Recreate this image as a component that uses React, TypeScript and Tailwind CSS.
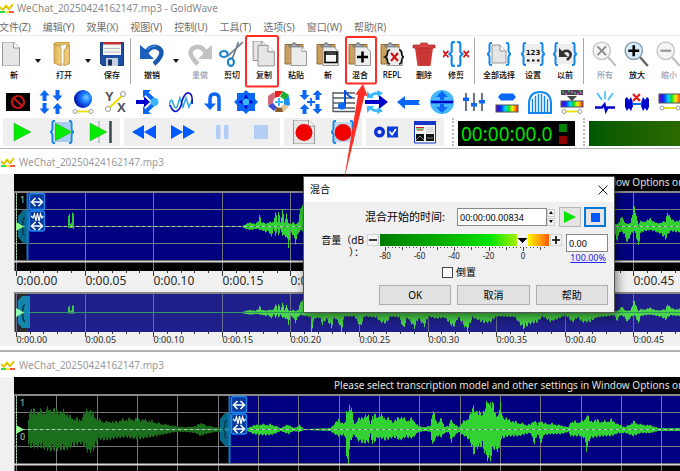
import React from "react";
import clsx from "clsx";

const BLUE = "#0a66f5";
const NAVY = "#0000cc";
const CYAN = "#38b6ff";

type Sample = [x: number, up: number, down: number];

interface Tool {
  label: string;
  icon: React.ReactNode;
  disabled?: boolean;
  menu?: string;
  className?: string;
}

/* ---------- shared icon parts ---------- */

function Icon({ children, className = "size-6" }: { children: React.ReactNode; className?: string }) {
  return (
    <svg viewBox="0 0 24 24" className={clsx("block shrink-0", className)} fill="none" aria-hidden="true">
      {children}
    </svg>
  );
}

const Paper = ({ x = 2, y = 0, w = 19, h = 24 }) => (
  <g>
    <path d={`M${x} ${y}h${w - 6}l6 6v${h - 6}h${-w}z`} fill="#e6e6e6" stroke="#8d8d8d" strokeWidth=".9" />
    <path d={`M${x + w - 6} ${y}v6h6`} fill="#fafafa" stroke="#8d8d8d" strokeWidth=".9" />
  </g>
);

const Braces = () => (
  <path
    d="M5 1H4Q2.5 1 2.5 3V9Q2.5 11 .5 12Q2.5 13 2.5 15V21Q2.5 23 4 23H5M19 1H20Q21.5 1 21.5 3V9Q21.5 11 23.5 12Q21.5 13 21.5 15V21Q21.5 23 20 23H19"
    stroke="#1487ee"
    strokeWidth="2"
  />
);

const Clipboard = ({ children }: { children?: React.ReactNode }) => (
  <Icon>
    <path d="M1 2.500h18v19.500H1z" fill="#c9a15c" stroke="#957036" />
    <path d="M5 5V3h3q0-2.500 2-2.500t2 2.500h3v2z" fill="#a8adb5" stroke="#636870" strokeWidth=".8" />
    <path d="M7 5h11l4.500 4.500V23.500H7z" fill="#ececec" stroke="#8f8f8f" strokeWidth=".9" />
    {children ?? <path d="M18 5v4.500h4.500" fill="#fff" stroke="#8f8f8f" strokeWidth=".8" />}
  </Icon>
);

const Rainbow = ({ y, h = 7, x = 1, w = 22 }: { y: number; h?: number; x?: number; w?: number }) => (
  <rect x={x} y={y} width={w} height={h} fill="url(#rainbow)" stroke="#4b5563" strokeWidth="1" />
);

const SliderBar = ({ y }: { y: number }) => (
  <g stroke="#9a9a9a">
    <path d={`M6 ${y}H18`} stroke="#e8e000" strokeWidth="1.800" />
    <circle cx="4" cy={y} r="2" fill="#fff" />
    <circle cx="20" cy={y} r="2" fill="#fff" />
  </g>
);

const Lens = ({ children, active }: { children: React.ReactNode; active?: boolean }) => (
  <Icon className="size-[26px]">
    <path d="M14.500 14.500l7.500 8.500" stroke={active ? "#666" : "#c4c4c4"} strokeWidth="2.200" />
    <circle cx="9" cy="9" r="8" fill={active ? "#d6ebfa" : "#f5f5f5"} stroke={active ? "#8a9aa8" : "#c4c4c4"} strokeWidth="1.300" />
    {children}
  </Icon>
);

function SharedDefs() {
  return (
    <svg className="absolute size-0" aria-hidden="true">
      <defs>
        <linearGradient id="rainbow">
          <stop offset="0" stopColor="#6a00b8" />
          <stop offset=".22" stopColor="#0030ff" />
          <stop offset=".42" stopColor="#00d8ff" />
          <stop offset=".58" stopColor="#10e020" />
          <stop offset=".75" stopColor="#f8f000" />
          <stop offset="1" stopColor="#ff2800" />
        </linearGradient>
        <radialGradient id="ball" cx=".68" cy=".42" r=".65">
          <stop offset="0" stopColor="#7fd0ff" />
          <stop offset=".4" stopColor="#1a7cff" />
          <stop offset="1" stopColor="#0010b0" />
        </radialGradient>
        <linearGradient id="folder">
          <stop offset="0" stopColor="#dcae4e" />
          <stop offset="1" stopColor="#f3d68c" />
        </linearGradient>
      </defs>
    </svg>
  );
}

function Logo() {
  return (
    <svg viewBox="0 0 14 10" className="h-2.5 w-3.5 shrink-0" aria-hidden="true">
      <path d="M0 4L3 6.500L6 2.500L9 6L13 1" fill="none" stroke="#f2d400" strokeWidth="2" />
      <path d="M0 4.800L3 7.300L6 3.300L9 6.800L13 1.800" fill="none" stroke="#a89000" strokeWidth=".5" />
      <path d="M0 9h5" stroke="#00d428" strokeWidth="1.600" />
      <path d="M5 9h4" stroke="#f4e400" strokeWidth="1.600" />
      <path d="M9 9h5" stroke="#ff2a10" strokeWidth="1.600" />
    </svg>
  );
}

/* ---------- main toolbar ---------- */

const fileTools: Tool[] = [
  { label: "新", icon: <Icon><Paper x={0.5} w={17} /></Icon>, menu: "w-5", className: "w-7" },
  {
    label: "打开",
    menu: "w-4",
    icon: (
      <Icon>
        <path d="M2 1.500L5 0h12v22H6z" fill="#e3b95c" stroke="#b58a35" strokeWidth=".7" />
        <path d="M8 4l6-2v20H8z" fill="#fff" stroke="#aaa" strokeWidth=".6" />
        <path d="M2 1.500l7 4v18.500l-7-3z" fill="url(#folder)" stroke="#b58a35" strokeWidth=".7" />
        <path d="M12 8l5.500-5v18L12 24z" fill="#edc977" stroke="#b58a35" strokeWidth=".7" />
      </Icon>
    ),
  },
  {
    label: "保存",
    icon: (
      <Icon>
        <path d="M.5.5h23v23H2.500l-2-2z" fill="#1d4fa3" stroke="#14386f" />
        <path d="M3 0h18v13H3z" fill="#f5f5f5" />
        <path d="M3 0h18v2.500H3z" fill="#c22f35" />
        <path d="M4 6.500h16M4 10h16" stroke="#b8b8b8" />
        <path d="M6 16h12v8H6z" fill="#c7d0dc" />
        <path d="M8 17.500h4v6H8z" fill="#173059" />
      </Icon>
    ),
  },
];

const editTools: Tool[] = [
  {
    label: "撤销",
    menu: "w-4",
    icon: (
      <Icon>
        <path d="M6 11Q10 4 16 5Q23 7 21 13Q19 18 14 22" stroke="#1758b4" strokeWidth="4.500" />
        <path d="M7 8Q11 3.500 16 4" stroke="#58a0e8" strokeWidth="1" />
        <path d="M0 3v14h14l-5-5L5 7z" fill="#1c5fbd" />
      </Icon>
    ),
  },
  {
    label: "重做",
    disabled: true,
    icon: (
      <Icon>
        <path d="M18 11Q14 4 8 5Q1 7 3 13Q5 18 10 22" stroke="#c2c2c2" strokeWidth="4.500" />
        <path d="M24 3v14H10l5-5 4-5z" fill="#c2c2c2" />
      </Icon>
    ),
  },
  {
    label: "剪切",
    icon: (
      <Icon className="size-[26px]">
        <path d="M22 1L8 14M18 1L12 17" stroke="#777f88" strokeWidth="1.600" />
        <ellipse cx="4.500" cy="12" rx="3.500" ry="2.800" stroke="#1f86c9" strokeWidth="2" />
        <ellipse cx="11" cy="19.500" rx="2.800" ry="3.500" stroke="#1f86c9" strokeWidth="2" />
      </Icon>
    ),
  },
  {
    label: "复制",
    icon: <Icon className="size-[26px]"><Paper x={2} w={14} h={18} /><Paper x={6.5} y={4} w={15} h={19} /></Icon>,
  },
  { label: "粘贴", icon: <Clipboard /> },
  {
    label: "新",
    icon: (
      <Clipboard>
        <path d="M9 10h12v10.500H9zM9 12h12" fill="#f4f4f4" stroke="#000" strokeWidth="1.600" />
      </Clipboard>
    ),
  },
  { label: "混合", icon: <Clipboard><path d="M14.500 9.500v11M9 15h11" stroke="#000" strokeWidth="2.600" /></Clipboard> },
  {
    label: "REPL",
    icon: (
      <Clipboard>
        <path d="M10 8q-2.500 0-2.500 3t-2.500 4q2.500 1 2.500 4t2.500 3M19 8q2.500 0 2.500 3t2 4q-2 1-2 4t-2.500 3" stroke="#111" strokeWidth="1.600" />
        <path d="M11 11l7 8M18 11l-7 8" stroke="#d01010" strokeWidth="2" />
      </Clipboard>
    ),
  },
  {
    label: "删除",
    icon: (
      <Icon>
        <path d="M3 6h18l-2.500 18h-13z" fill="#cf3a38" />
        <path d="M8 8l1 14M12 8v14M16 8l-1 14" stroke="#b83230" />
        <path d="M1 3h7l1-2h6l1 2h7v3H1z" fill="#d94441" stroke="#9e2626" strokeWidth=".7" />
      </Icon>
    ),
  },
  {
    label: "修剪",
    icon: (
      <Icon className="size-[26px]">
        <path d="M11 1H9.500Q8 1 8 3v7l-2 2 2 2v7q0 2 1.500 2H11M13 1h1.500Q16 1 16 3v7l2 2-2 2v7q0 2-1.500 2H13" stroke="#1487ee" strokeWidth="2" />
        <path d="M0 9l5 6M5 9l-5 6M19 9l5 6M24 9l-5 6" stroke="#dd1111" strokeWidth="1.700" />
      </Icon>
    ),
  },
];

const selectTools: Tool[] = [
  { label: "全部选择", className: "w-9", icon: <Icon><Paper x={5} y={3} w={14} h={18} /><Braces /></Icon> },
  {
    label: "设置",
    icon: (
      <Icon>
        <path d="M3 2h18v20H3z" fill="#eee" />
        <Braces />
        <text x="12" y="13" textAnchor="middle" fontSize="7" fontWeight="700" fill="#111" fontFamily="DejaVu Sans">123</text>
        <path d="M6 18.500h2.500M11 18.500h2.500M16 18.500h2.500" stroke="#111" strokeWidth="2.200" />
      </Icon>
    ),
  },
  {
    label: "以前",
    icon: (
      <Icon>
        <path d="M3 2h18v20H3z" fill="#eee" />
        <Braces />
        <path d="M8 12q3-4 7-3 4 2 2 6l-3 3" stroke="#333" strokeWidth="2.600" />
        <path d="M6 6v9h9z" fill="#333" />
      </Icon>
    ),
  },
];

const zoomTools: Tool[] = [
  { label: "所有", disabled: true, icon: <Lens><path d="M5 5l8 8M13 5l-8 8" stroke="#8b8b8b" strokeWidth="1.800" /></Lens> },
  { label: "放大", icon: <Lens active><path d="M9 4v10M4 9h10" stroke="#000" strokeWidth="2.400" /></Lens> },
  { label: "缩小", disabled: true, icon: <Lens><path d="M4 9h10" stroke="#999" strokeWidth="2" /></Lens> },
];

function ToolGroup({ tools, className }: { tools: Tool[]; className?: string }) {
  return (
    <div className={clsx("flex shrink-0", className)}>
      {tools.map((tool) => (
        <React.Fragment key={tool.label + (tool.menu ?? "")}>
          <button
            disabled={tool.disabled}
            className={clsx(
              "flex shrink-0 flex-col items-center gap-0.5 text-[8px] leading-3 font-medium whitespace-nowrap",
              tool.className ?? "w-8",
              tool.disabled ? "text-gray-400" : "text-black"
            )}
          >
            <span className="flex h-[26px] items-center justify-center">{tool.icon}</span>
            {tool.label}
          </button>
          {tool.menu && (
            <button aria-label={`${tool.label} ▾`} className={clsx("flex h-10 shrink-0 items-center justify-center", tool.menu)}>
              <svg viewBox="0 0 6 4" className="h-1 w-1.5"><path d="M0 0h6L3 4z" fill="#111" /></svg>
            </button>
          )}
        </React.Fragment>
      ))}
    </div>
  );
}

const Divider = ({ className }: { className?: string }) => (
  <span className={clsx("h-[46px] w-px shrink-0 bg-[#a8a8a8]", className)} />
);

/* ---------- effects toolbar ---------- */

const effects: [string, React.ReactNode][] = [
  ["Censor", (
    <>
      <path d="M0 3h24v18H0z" fill="#000" />
      <circle cx="12" cy="12" r="6" stroke="#c01818" strokeWidth="2.200" />
      <path d="M8 8l8 8" stroke="#c01818" strokeWidth="2.200" />
    </>
  )],
  ["Doppler", (
    <path
      d="M5.500 0l5 5.500H7.500V11h-4V5.500H.5zM18.500 11l-5-5.500h3V0h4v5.500h3zM5.500 24l-5-5.500h3V13h4v5.500h3zM18.500 13l5 5.500h-3V24h-4v-5.500h-3z"
      fill={BLUE}
    />
  )],
  ["Dynamics", (
    <>
      <circle cx="12" cy="9" r="9" fill="url(#ball)" />
      <SliderBar y={21.5} />
    </>
  )],
  ["Expression", (
    <>
      <path d="M5 18L19 5" stroke="#e8e000" strokeWidth="2" />
      <circle cx="4" cy="19" r="2.500" fill="#fff" stroke="#999" />
      <circle cx="19" cy="4" r="2.500" fill="#fff" stroke="#999" />
      <text x="1" y="11" fontSize="13" fontWeight="700" fill="#4a5058" fontFamily="Liberation Sans">Y</text>
      <text x="13" y="22" fontSize="13" fontWeight="700" fill="#4a5058" fontFamily="Liberation Sans">X</text>
    </>
  )],
  ["Crossfade", (
    <>
      <path d="M7 0h8l-2.500 2.500 7 6.500-3 3-7-7L7 8zM7 24h8l-2.500-2.500 7-6.500-3-3-7 7L7 16z" fill={BLUE} />
      <path d="M0 10h8V6.500l6 5.500-6 5.500V14H0z" fill={NAVY} />
      <circle cx="18.500" cy="12" r="4" fill={CYAN} />
    </>
  )],
  ["Filter", (
    <>
      <path d="M0 16q2-10 4-3t4 4l3-9 3 9 3-9 3 9 3-7" stroke="#39a9e8" strokeWidth="1.600" />
      <path d="M1 15q3 8 7 6t5-10Q16 2 20 3t3 11" stroke="#1818c8" strokeWidth="1.700" />
    </>
  )],
  ["Echo", (
    <>
      <path d="M17 21V9q0-5-4.500-5T8 9v6" stroke={BLUE} strokeWidth="3.500" />
      <path d="M2 13.500h12L8 20z" fill={BLUE} />
    </>
  )],
  ["Flanger", (
    <>
      <path d="M3 3h18v18H3z" fill={BLUE} />
      <path d="M12 0l12 12-12 12L0 12z" fill={BLUE} />
      <path d="M12 4l2.500 5.500L20 12l-5.500 2.500L12 20l-2.500-5.500L4 12l5.500-2.500z" fill={NAVY} />
      <circle cx="12" cy="12" r="3.500" fill={CYAN} />
    </>
  )],
  ["Mechanize", (
    <>
      <path d="M8 1h8l-4 6-5 1z" fill="#e82020" />
      <path d="M16 1l6 4-3 6-6-4z" fill="#20b030" />
      <path d="M22 6l1 9-6 2-1-6z" fill="#1890ff" />
      <path d="M22 16l-5 6-4-4 3-4z" fill="#e0c8a0" />
      <path d="M16 22H8l1-5 6 1z" fill="#8a5a28" />
      <path d="M7 21l-6-5 4-4 5 5z" fill="#4050d0" />
      <path d="M1 15V6l6-4 1 5-3 7z" fill="#d06878" />
      <circle cx="12" cy="12" r="5" fill="#fff" />
      <path d="M12 8v8M8 12h8" stroke={CYAN} strokeWidth="2" />
    </>
  )],
  ["Offset", (
    <>
      <path d="M5.500 10l-5-5h3V0h4v5h3zM18.500 0l5 5h-3v5h-4V5h-3zM5.500 14l5 5h-3v5h-4v-5h-3zM18.500 24l-5-5h3v-5h4v5h3z" fill={BLUE} />
      <path d="M12 8v8M8 12h8" stroke={BLUE} strokeWidth="1.800" />
    </>
  )],
  ["Pitch", (
    <>
      <path d="M1 2v20M1 3h22M1 8h22M1 13h22M1 18h22M1 21.500h22" stroke="#555c66" strokeWidth="1.300" />
      <path d="M13 16V1q3 5 7 7" stroke="#0a50e0" strokeWidth="2" />
      <ellipse cx="10" cy="16" rx="4" ry="3.400" fill={BLUE} />
    </>
  )],
  ["Time warp", (
    <>
      <path d="M0 10h14V5l9 7-9 7v-5H0z" fill={NAVY} />
      <path d="M6 6q3-4 9-2M6 18q3 4 9 2" stroke={CYAN} strokeWidth="2.600" />
      <path d="M12 0l6 3-5 4zM12 24l6-3-5-4zM2 1v7h7zM2 23v-7h7z" fill={CYAN} />
    </>
  )],
  ["Reverse", <path d="M0 12l8-6v4h15l-1.500 2.500L23 15H8v4z" fill={BLUE} />],
  ["Maximize", (
    <>
      <circle cx="12" cy="12" r="12" fill="#45b8ff" />
      <path d="M12 1l6 6h-4v3h-4V7H6zM12 23l6-6h-4v-3h-4v3H6z" fill={BLUE} />
      <path d="M1 12h22" stroke={NAVY} strokeWidth="2.600" />
    </>
  )],
  ["Equalizer", (
    <>
      <path d="M4 3v18M12 3v18M20 3v18" stroke="#4a5560" strokeWidth="1.600" />
      <path d="M1 7.500h6v3.500H1zM9 13h6v3.500H9zM17 10h6v3.500h-6z" fill={BLUE} />
    </>
  )],
  ["Spectrum", <><path d="M3 7l3-3.500h12L21 7l-3 3.500H6z" fill={BLUE} /><Rainbow y={15} /></>],
  ["Reverb", (
    <>
      <path d="M1 23V12Q2 2 12 2t11 10v11z" fill="#e8f4ff" stroke="#1487ee" strokeWidth="2" />
      <path d="M4.500 22V9M7.500 22V6M10.500 22V4M13.500 22V4M16.500 22V6M19.500 22V9" stroke="#1487ee" strokeWidth="1.300" />
    </>
  )],
  ["Noise reduction", (
    <>
      <path d="M1 0h22v5H1z" fill="#4d4455" />
      <path d="M2 2h2M8 1h2M14 3h2M19 1h2" stroke="#30d050" strokeWidth="1.600" />
      <path d="M5 4h2M11 2h2M17 4h2M20 3h2" stroke="#e050e0" strokeWidth="1.600" />
      <path d="M7 6h10l-5 5z" fill="#444" />
      <Rainbow y={11} h={6} />
      <SliderBar y={21.5} />
    </>
  )],
  ["Pop click", (
    <>
      <path d="M12 1v8M4 3l5 7M20 3l-5 7" stroke={CYAN} strokeWidth="1.500" />
      <path d="M2 17.500h7l2.500-3 1.500 6 1.500-3H22" stroke={NAVY} strokeWidth="2.600" />
    </>
  )],
  ["Silence", (
    <>
      <path d="M0 9l2-2 2 3 2-3 2 6v3l-2 5-2-3-2 3-2-4zM24 9l-2-2-2 3-2-3-2 6v3l2 5 2-3 2 3 2-4z" fill={NAVY} />
      <path d="M7 14h10" stroke={BLUE} strokeWidth="2" />
      <path d="M8 4l7 7M15 4l-7 7" stroke="#e01818" strokeWidth="2.200" />
    </>
  )],
  ["Spectrum filter", <><Rainbow y={4} h={9} /><SliderBar y={18} /></>],
];

/* ---------- transport ---------- */

const PlayShape = ({ x = 4 }: { x?: number }) => <path d={`M${x} 3l17 9-17 9z`} fill="#00ec00" stroke="#3c8c3c" strokeWidth=".4" />;

const transport: [string, React.ReactNode][][] = [
  [
    ["Play", <PlayShape x={3} />],
    ["Play selection", <><path d="M5 2h15v20H5z" fill="#a9cdf0" /><PlayShape x={5} /><Braces /></>],
    ["Play to end", <><path d="M10 1v22" stroke="#999" /><PlayShape x={1} /><path d="M21.500 1v22" stroke="#3c444c" strokeWidth="2.500" /></>],
  ],
  [
    ["Rewind", <path d="M0 12l12-7v14zM12 12l12-7v14z" fill="#0058ff" />],
    ["Fast forward", <path d="M24 12L12 5v14zM12 12L0 5v14z" fill="#0058ff" />],
    ["Pause", <path d="M6 5h4.500v14H6zM14 5h4.500v14H14z" fill="#b3cdf7" />],
    ["Stop", <path d="M5 5h14v14H5z" fill="#b3cdf7" />],
  ],
  [
    ["Record new", <><Paper x={1.5} y={0} w={21} h={24} /><circle cx="12" cy="12.500" r="8.500" fill="#f00000" /></>],
    ["Record selection", <><path d="M4 2h16v20H4z" fill="#bcd9f2" /><Braces /><circle cx="12" cy="12.500" r="8.500" fill="#f00000" /></>],
  ],
  [
    ["Control properties", (
      <>
        <circle cx="5.500" cy="12" r="3.800" stroke="#0a30d8" strokeWidth="3.400" />
        <path d="M13 6.500h11v11H13z" fill="#0a40e0" />
        <path d="M15.500 11.500l2.500 3 4-5.500" stroke="#fff" strokeWidth="1.700" />
      </>
    )],
    ["Visuals", (
      <>
        <path d="M1.500 2h21v21h-21z" fill="#f4f4f4" stroke="#1734c8" />
        <path d="M1 1h22v4H1z" fill="#1734c8" />
        <path d="M3 7.500h8M4 10h6" stroke="#e02020" />
        <path d="M3 9h8" stroke="#20b020" />
        <path d="M13 7h8v6h-8z" fill="#ddd" />
        <path d="M3 14h8v7H3zM13 14h8v7h-8z" fill="#111" />
        <path d="M3 20l4-4 4 4M14 18h6" stroke="#888" />
      </>
    )],
  ],
];

/* ---------- waveforms ---------- */

const ORIGIN = 2;

function sampleAt(samples: Sample[], x: number) {
  const i = samples.findIndex((s) => s[0] > x);
  if (i <= 0) return [0, 0];
  const [a, b] = [samples[i - 1], samples[i]];
  const t = (x - a[0]) / (b[0] - a[0]);
  return [a[1] + (b[1] - a[1]) * t, a[2] + (b[2] - a[2]) * t];
}

function tracePath(samples: Sample[], mid: number, scale = 1) {
  let d = "";
  for (let x = samples[0][0]; x < samples[samples.length - 1][0]; x++) {
    const [up, down] = sampleAt(samples, x);
    const noise = 0.72 + 0.38 * Math.abs(Math.sin(x * 12.9898) * Math.cos(x * 4.1));
    const noise2 = 0.72 + 0.38 * Math.abs(Math.cos(x * 7.233));
    d += `M${x + 0.5} ${(mid - up * noise * scale - 0.5).toFixed(1)}V${(mid + down * noise2 * scale + 0.5).toFixed(1)}`;
  }
  return d;
}

const blip: Sample[] = [[54, 14, 1], [55, 12, 1], [56, 2, 1], [57, 4, 1], [58, 16, 1], [59, 16, 2], [60, 1, 1]];

const voice: Sample[] = [
  [229, 1, 1], [236, 4, 3], [241, 2, 2], [244, 6, 2], [245, 15, 3], [247, 4, 3], [251, 3, 5], [254, 4, 4], [257, 4, 10],
  [259, 5, 2], [261, 17, 8], [263, 4, 3], [264, 18, 8], [266, 4, 3], [268, 20, 8], [270, 4, 9], [272, 12, 10], [274, 4, 20],
  [276, 2, 4], [279, 4, 9], [281, 2, 16], [284, 5, 6], [287, 24, 3], [289, 22, 5], [292, 6, 5], [296, 4, 8], [297, 5, 33],
  [300, 6, 10], [305, 4, 8], [308, 5, 20], [312, 6, 10], [317, 4, 26], [320, 6, 8], [324, 5, 16], [327, 4, 34], [330, 6, 6],
  [340, 5, 6], [346, 5, 24], [350, 5, 6], [362, 4, 8], [366, 4, 16], [372, 4, 18], [376, 4, 6], [385, 5, 8], [389, 6, 28],
  [393, 4, 8], [400, 5, 26], [404, 4, 10], [410, 5, 23], [414, 4, 6], [422, 4, 10], [430, 5, 8], [439, 5, 25], [444, 4, 8],
  [453, 5, 31], [458, 4, 8], [469, 6, 17], [476, 5, 16], [482, 4, 6], [500, 4, 7], [509, 6, 27], [515, 5, 19], [523, 4, 16],
  [528, 4, 6], [536, 4, 15], [544, 5, 10], [551, 4, 4], [558, 4, 16], [563, 5, 8], [568, 4, 16], [576, 6, 15], [582, 4, 8],
  [592, 6, 6], [600, 3, 4], [603, 2, 15], [605, 5, 5], [608, 12, 5], [610, 4, 8], [613, 2, 16], [616, 4, 8], [619, 20, 4],
  [621, 17, 6], [624, 2, 20], [626, 5, 6], [630, 5, 4], [636, 8, 3], [642, 3, 5], [647, 4, 7], [651, 5, 12], [653, 18, 8],
  [656, 8, 4], [662, 5, 5], [668, 7, 5], [680, 4, 4],
];

const fadeOut: Sample[] = [
  [14, 11, 15], [15, 21, 17], [26, 19, 17], [36, 22, 20], [46, 19, 19], [52, 19, 19], [56, 13, 17], [66, 10, 13], [70, 17, 16],
  [74, 23, 22], [79, 16, 20], [84, 10, 9], [91, 8, 10], [101, 8, 8], [111, 11, 7], [123, 11, 9], [136, 9, 7], [146, 6, 5],
  [161, 3, 2], [171, 2, 2], [181, 3, 3], [186, 7, 6], [191, 4, 4], [201, 2, 2], [215, 1, 1],
];

const mixed: Sample[] = [
  [233, 1, 1], [239, 4, 4], [248, 5, 5], [256, 5, 5], [262, 3, 3], [266, 1, 1], [274, 5, 4], [279, 1, 1], [285, 4, 2],
  [290, 0, 0], [316, 1, 1], [320, 6, 4], [324, 10, 6], [329, 6, 5], [331, 7, 7], [332, 20, 30], [334, 24, 32], [335, 28, 20],
  [336, 26, 12], [338, 16, 7], [340, 6, 5], [343, 10, 10], [349, 14, 13], [354, 14, 12], [356, 7, 4], [358, 14, 14],
  [364, 15, 7], [371, 13, 10], [379, 8, 7], [386, 14, 10], [391, 10, 7], [398, 11, 8], [404, 3, 2], [411, 2, 1], [416, 4, 2],
  [418, 19, 16], [420, 15, 10], [423, 7, 6], [427, 11, 7], [430, 3, 3], [434, 3, 2], [437, 12, 12], [439, 6, 7], [444, 2, 2],
  [448, 7, 5], [452, 11, 7], [456, 15, 12], [459, 27, 24], [462, 18, 18], [468, 18, 15], [471, 22, 25], [474, 34, 30],
  [476, 31, 29], [479, 24, 18], [482, 16, 20], [485, 18, 20], [486, 28, 10], [488, 14, 8], [494, 10, 6], [504, 7, 6],
  [511, 5, 4], [516, 5, 3], [520, 10, 14], [523, 5, 4], [527, 10, 14], [529, 6, 5], [536, 6, 4], [546, 4, 4], [554, 2, 2],
  [556, 8, 6], [566, 8, 6], [570, 10, 8], [572, 17, 20], [576, 8, 8], [581, 10, 7], [589, 8, 6], [597, 10, 6], [604, 5, 3],
  [611, 2, 3], [619, 8, 6], [626, 5, 3], [636, 4, 3], [644, 1, 1], [680, 1, 1],
];

const gridXs = (step: number) => Array.from({ length: Math.floor(1600 / step) }, (_, i) => Math.round(ORIGIN + step * i) + 0.5);

/* Start-of-selection handle with its two drag buttons. */
function SelectionHandle({ x }: { x: number }) {
  const arrows = (y: number) => (
    <path d={`M${x + 5} ${y}h10M${x + 8.5} ${y - 4}l-4 4 4 4M${x + 11.5} ${y - 4}l4 4-4 4`} stroke="#fff" strokeWidth="1.500" fill="none" />
  );
  return (
    <g>
      <path d={`M${x + 2} 19h-6l-5 6v21l5 6h6z`} fill="#0a8cb4" fillOpacity=".75" />
      <path d={`M${x - 2} 27q-3 0-2 4 0 3-2 4 2 1 2 5-1 4 2 4`} stroke="#04394d" strokeWidth="1.300" fill="none" />
      <path d={`M${x + 0.5} 2v67`} stroke="#1478c8" strokeWidth="2" />
      <rect x={x + 2.5} y="2.500" width="15" height="16" rx="2" fill="#0a3ca0" stroke="#1e88f0" strokeWidth="1.300" />
      <rect x={x + 2.5} y="20" width="15" height="20" rx="2" fill="#0a3ca0" stroke="#1e88f0" strokeWidth="1.300" />
      {arrows(11)}
      <path d={`M${x + 4} 25l2 2 1.500-4 1.500 7 1.500-8 1.500 8 1.500-7 1.500 4 1.500-2`} stroke="#fff" strokeWidth="1.200" fill="none" />
      {arrows(35)}
    </g>
  );
}

interface WaveViewProps {
  step: number;
  selectionStart: number;
  traces: { samples: Sample[]; color: string }[];
  showZero?: boolean;
}

function WaveView({ step, selectionStart, traces, showZero }: WaveViewProps) {
  return (
    <svg className="block h-20 w-full bg-black font-['Noto_Sans']" role="img" aria-label="Waveform">
      <rect x={selectionStart} y="2" width="100%" height="67" fill="#000080" />
      {gridXs(step).map((x) => <path key={x} d={`M${x} 2v78`} stroke="#777780" />)}
      <path d="M0 18.500H3000M0 52.500H3000" stroke="#777780" />
      <path d="M0 1H3000" stroke="#888" strokeWidth="2" />
      <path d="M.5 0V80" stroke="#777" />
      {traces.map(({ samples, color }, i) => (
        <path key={i} d={tracePath(samples, 35.5)} stroke={color} />
      ))}
      <path d="M8 35.500H3000" stroke="#2f9a4c" />
      <path d="M8 35.500H3000" stroke="#b8c8b8" strokeDasharray="3 3" />
      <path d="M2.500 2V69" stroke="#a8d8a8" strokeDasharray="2 1" />
      <path d="M0 70.500H3000" stroke="#d8d8d8" strokeWidth="2" />
      <text x="6" y="12" fontSize="9" fill="#b8c8b8">1</text>
      {showZero && <text x="6" y="46" fontSize="9" fill="#b8c8b8">0</text>}
      <SelectionHandle x={selectionStart} />
      <path d="M2 31l8 4.500-8 4.500z" fill="#90ff90" />
    </svg>
  );
}

function Ruler({ className, fontSize, baseline }: { className: string; fontSize: number; baseline: number }) {
  const label = (i: number) => `0:00.${String(i * 5).padStart(2, "0")}`;
  return (
    <svg className={clsx("block w-full bg-[#f0f0f0] font-['Noto_Sans']", className)}>
      {gridXs(68.6 / 5).map((x, i) => <path key={x} d={`M${x} 0v${i % 5 ? 2 : 5}`} stroke="#333" />)}
      {gridXs(68.6).slice(0, 20).map((x, i) => (
        <text key={x} x={x} y={baseline} fontSize={fontSize} fill="#2b2b2b">{label(i)}</text>
      ))}
    </svg>
  );
}

function Overview() {
  return (
    <svg className="block h-10 w-full bg-[#20208c]" role="img" aria-label="Overview">
      <rect width="13" height="40" fill="#2b2b2b" />
      {gridXs(68.6).map((x) => <path key={x} d={`M${x} 0v40`} stroke="#6c6c90" />)}
      <path d="M0 1H3000" stroke="#888" strokeWidth="2" />
      <path d="M.5 0V40" stroke="#888" />
      <path d={tracePath(voice, 20.5, 0.56)} stroke="#4ad84a" />
      <path d={tracePath(blip, 20.5, 0.5)} stroke="#3ec84a" />
      <path d="M8 20.500H3000" stroke="#2f9a60" />
      <path d="M16 4H8L4 9v22l4 5h8z" fill="#1496c4" fillOpacity=".85" />
      <path d="M11 13q-2 0-2 4 0 3-2 4 2 1 2 4 0 4 2 5" stroke="#04394d" strokeWidth="1.500" fill="none" />
      <path d="M2 16l8 4.500-8 4.500z" fill="#90ffb0" />
    </svg>
  );
}

function SoundWindow({ className, children }: { className?: string; children: React.ReactNode }) {
  return (
    <section className={className}>
      <h2 className="flex h-6 items-center gap-1 bg-white pl-px text-[10px] text-[#9a9a9a]">
        <Logo />
        WeChat_20250424162147.mp3
      </h2>
      <div className="flex bg-[#f0f0f0] pl-3.5">
        <div className="min-w-0 flex-1">
          <p className="h-[17px] overflow-hidden bg-black pl-[320px] text-[10px] leading-4 whitespace-nowrap text-[#e0e0e0]">
            Please select transcription model and other settings in Window Options or
          </p>
          {children}
        </div>
      </div>
    </section>
  );
}

/* ---------- mix dialog ---------- */

const dialogButton = "h-5 flex-1 border border-[#adadad] bg-[#e1e1e1] text-[10px] leading-4 text-black";
const iconButton = "flex h-5 w-[22px] shrink-0 items-center justify-center border bg-[#e4e4e4]";
const stepButton = "flex h-3 w-3 shrink-0 items-center justify-center border border-[#d0d0d0] bg-[#f4f4f4]";

function MixDialog() {
  return (
    <div
      role="dialog"
      aria-labelledby="mix-title"
      className="absolute top-44 left-[303px] h-[137px] w-[312px] border border-[#555] bg-[#f0f0f0] text-black shadow-[2px_4px_10px_rgba(0,0,0,0.5)]"
    >
      <div className="flex h-[25px] items-center justify-between bg-white px-1.5">
        <h3 id="mix-title" className="text-[10px]">混合</h3>
        <button aria-label="关闭">
          <svg viewBox="0 0 10 10" className="size-2.5"><path d="M.5.5l9 9M9.500.5l-9 9" stroke="#222" /></svg>
        </button>
      </div>

      <div className="flex items-center justify-end pt-[5px] pr-2">
        <label htmlFor="start" className="mr-3 text-[11px] leading-4">混合开始的时间:</label>
        <input id="start" defaultValue="00:00:00.00834" className="h-[18px] w-[90px] border border-[#888] bg-white px-0.5 text-[9px]" />
        <div className="mr-1 flex w-2 flex-col gap-px">
          <button aria-label="增加" className="flex h-2 items-center justify-center border border-[#ccc] bg-[#f4f4f4]">
            <svg viewBox="0 0 4 3" className="h-[3px] w-1"><path d="M2 0l2 3H0z" /></svg>
          </button>
          <button aria-label="减少" className="flex h-2 items-center justify-center border border-[#ccc] bg-[#f4f4f4]">
            <svg viewBox="0 0 4 3" className="h-[3px] w-1"><path d="M0 0h4L2 3z" /></svg>
          </button>
        </div>
        <button aria-label="播放" className={clsx(iconButton, "mr-[3px] border-[#b5b5b5]")}>
          <svg viewBox="0 0 12 12" className="size-3"><path d="M0 0l12 6-12 6z" fill="#00e400" /></svg>
        </button>
        <button aria-label="停止" className={clsx(iconButton, "border-2 border-[#0078d7]")}>
          <span className="size-[9px] bg-[#0058ff]" />
        </button>
      </div>

      <div className="mt-[7px] flex h-[30px] items-start pr-1.5 pl-2">
        <label htmlFor="volume" className="w-[52px] shrink-0 text-right text-[10px] leading-3">
          音量（dB<br />）：
        </label>
        <div className="ml-[3px] min-w-0 flex-1">
          <div className="flex h-3 items-stretch gap-px">
            <button aria-label="降低音量" className={stepButton}>
              <svg viewBox="0 0 8 8" className="size-2"><path d="M0 4h8" stroke="#000" strokeWidth="1.500" /></svg>
            </button>
            <input
              type="range"
              aria-label="音量"
              min={-80}
              max={12}
              defaultValue={0}
              className="m-0 h-3 min-w-0 flex-1 appearance-none bg-[linear-gradient(90deg,#007d00_0%,#00b400_40%,#00e400_65%,#b0f000_82%,#fff000_88%,#ff9a00_95%,#ff5a00_100%)] [&::-webkit-slider-thumb]:h-3 [&::-webkit-slider-thumb]:w-[11px] [&::-webkit-slider-thumb]:appearance-none [&::-webkit-slider-thumb]:border-t-4 [&::-webkit-slider-thumb]:border-[#f4f4f4] [&::-webkit-slider-thumb]:bg-[conic-gradient(from_-45deg_at_50%_60%,#000_90deg,#f4f4f4_0)]"
            />
            <button aria-label="提高音量" className={stepButton}>
              <svg viewBox="0 0 8 8" className="size-2"><path d="M0 4h8M4 0v8" stroke="#000" strokeWidth="1.600" /></svg>
            </button>
          </div>
          <svg className="block h-4 w-full text-[8px]" aria-hidden="true">
            {Array.from({ length: 47 }, (_, i) => (
              <path key={i} d={`M${Math.round(18 + i * 3.45) + 0.5} 1v${i % 10 === 0 ? 4 : i % 5 === 0 ? 3 : 1}`} stroke="#444" />
            ))}
            {[-80, -60, -40, -20, 0].map((db, i) => (
              <text key={db} x={18 + i * 34.5} y="13" textAnchor="middle" fill="#222">{db}</text>
            ))}
          </svg>
        </div>
        <div className="ml-1 w-[42px] shrink-0 text-right">
          <input id="volume" defaultValue="0.00" className="block h-[18px] w-full border border-[#888] bg-white px-0.5 text-[9px]" />
          <a href="#percent" className="block pr-0.5 text-[9px] leading-3 text-[#2222ee] underline">100.00%</a>
        </div>
      </div>

      <label className="ml-[138px] flex h-4 w-fit items-center gap-[3px] text-[10px] leading-4">
        <input type="checkbox" className="size-[11px] appearance-none border border-[#444] bg-white" />
        倒置
      </label>

      <div className="mt-[5px] flex gap-1.5 pr-1.5 pl-[75px]">
        <button className={dialogButton}>OK</button>
        <button className={dialogButton}>取消</button>
        <button className={dialogButton}>帮助</button>
      </div>
    </div>
  );
}

/* Red boxes around copy and mix, with an arrow down to the dialog. */
function Callouts() {
  return (
    <svg className="pointer-events-none absolute top-0 left-0 h-[190px] w-[400px]" fill="none" aria-hidden="true">
      <rect x="246" y="36" width="32" height="50.500" rx="1.500" stroke="#ff2d25" strokeWidth="2" />
      <rect x="346" y="37" width="30" height="46.500" rx="1.500" stroke="#ff2d25" strokeWidth="2" />
      <path d="M363 84l4.500 12-3-.5L344 180l14-85.500-3 .5z" fill="#ff2d25" />
    </svg>
  );
}

const menus = ["文件(Z)", "编辑(Y)", "效果(X)", "视图(V)", "控制(U)", "工具(T)", "选项(S)", "窗口(W)", "帮助(R)"];

export default function App() {
  return (
    <div className="relative overflow-hidden bg-white font-['Noto_Sans','Noto_Sans_CJK_SC',sans-serif]">
      <SharedDefs />
      <header>
        <h1 className="flex h-4 items-center gap-[3px] text-[10px] text-[#8a8a8a]">
          <Logo />
          WeChat_20250424162147.mp3 - GoldWave
        </h1>
        <nav className="-ml-px flex h-5 items-center gap-3 border-b border-[#ececec] pt-1 text-[10px] text-[#6e6e6e]">
          {menus.map((m) => <button key={m} className="whitespace-nowrap">{m}</button>)}
        </nav>
      </header>

      <div className="flex h-[49px] items-start overflow-hidden pt-[5px]">
        <ToolGroup tools={fileTools} />
        <Divider className="-mt-[3px] mx-0.5" />
        <ToolGroup tools={editTools} className="ml-[3px]" />
        <Divider className="-mt-[3px] mx-0.5" />
        <ToolGroup tools={selectTools} className="ml-1" />
        <Divider className="-mt-[3px] mx-0.5" />
        <ToolGroup tools={zoomTools} className="ml-[3px]" />
      </div>

      <div className="-mr-0.5 flex h-[33px] items-center justify-between pl-1.5">
        {effects.map(([name, shape]) => (
          <button key={name} aria-label={name}><Icon>{shape}</Icon></button>
        ))}
      </div>

      <div className="flex h-[31px] items-start gap-1 border-b border-[#b5b5b5] pl-[3px]">
        {transport.map((group, i) => (
          <div key={i} className="flex h-7 shrink-0 bg-[#efefef]">
            {group.map(([name, shape]) => (
              <button key={name} aria-label={name} className="flex w-[39px] items-center justify-center">
                <Icon>{shape}</Icon>
              </button>
            ))}
          </div>
        ))}
        <span className="ml-1 h-7 shrink-0 border-l-2 border-dotted border-[#bbb]" />
        <div className="mt-[3px] flex h-[25px] w-[117px] shrink-0 items-center justify-between bg-black pr-2 pl-[3px]">
          <output className="text-[19px] leading-6 text-[#00e000]">00:00:00.0</output>
          <span className="flex flex-col gap-1">
            <span className="size-2 bg-[#008000]" />
            <span className="size-2 bg-[#900000]" />
          </span>
        </div>
        <span className="ml-1 h-7 shrink-0 border-l-2 border-dotted border-[#bbb]" />
        <div className="mt-[3px] h-[25px] flex-1 bg-linear-to-r from-[#005800] to-[#2a6a00]" />
      </div>

      <main>
        <SoundWindow className="border-b-2 border-[#b0b0b0] pt-px">
          <WaveView
            step={68.6}
            selectionStart={13}
            traces={[{ samples: voice, color: "#32d232" }, { samples: blip, color: "#32c832" }]}
          />
          <Ruler className="h-[21px]" fontSize={12} baseline={14} />
          <Overview />
          <div className="-ml-3.5 border-b-4 border-white bg-[#f0f0f0] pl-3.5">
            <Ruler className="h-3.5" fontSize={9} baseline={11} />
          </div>
        </SoundWindow>

        <SoundWindow className="pt-px">
          <WaveView
            step={40.33}
            selectionStart={215}
            showZero
            traces={[{ samples: fadeOut, color: "#1b6e1b" }, { samples: mixed, color: "#32d232" }]}
          />
        </SoundWindow>
      </main>

      <MixDialog />
      <Callouts />
    </div>
  );
}
